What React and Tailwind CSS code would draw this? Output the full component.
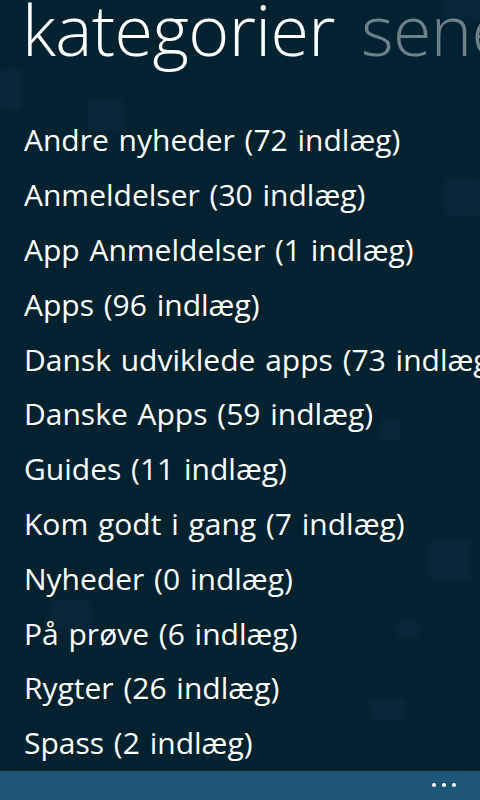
import React from 'react';

const categories = [
  'Andre nyheder (72 indlæg)',
  'Anmeldelser (30 indlæg)',
  'App Anmeldelser (1 indlæg)',
  'Apps (96 indlæg)',
  'Dansk udviklede apps (73 indlæg)',
  'Danske Apps (59 indlæg)',
  'Guides (11 indlæg)',
  'Kom godt i gang (7 indlæg)',
  'Nyheder (0 indlæg)',
  'På prøve (6 indlæg)',
  'Rygter (26 indlæg)',
  'Spass (2 indlæg)',
];

// faint tile shapes in the backdrop
const tiles = [
  { l: 0, t: 70, w: 22, h: 40 },
  { l: 88, t: 100, w: 36, h: 30 },
  { l: 445, t: 0, w: 35, h: 20 },
  { l: 446, t: 178, w: 34, h: 38 },
  { l: 380, t: 420, w: 20, h: 20 },
  { l: 430, t: 540, w: 40, h: 40 },
  { l: 50, t: 600, w: 40, h: 30 },
  { l: 398, t: 620, w: 20, h: 18 },
  { l: 370, t: 700, w: 35, h: 20 },
];

const App = () => {
  return (
    <div
      className="relative w-[480px] h-[800px] overflow-hidden bg-[#03222f] text-white"
      style={{ fontFamily: '"Open Sans", "Noto Sans", sans-serif' }}
    >
      {tiles.map((t, i) => (
        <div
          key={i}
          className="absolute bg-[#0a2a3e] blur-[3px] opacity-70"
          style={{ left: t.l, top: t.t, width: t.w, height: t.h }}
        />
      ))}

      <div className="relative flex flex-col h-full">
        <div className="flex whitespace-nowrap pl-[22px] mt-[-16px] h-[90px] text-[70px] font-light leading-[90px] tracking-[-0.6px]">
          <span>kategorier</span>
          <span className="ml-[26px] text-[#6e808a]">seneste</span>
        </div>

        <ul className="flex flex-col mt-[39px] pl-[24px]">
          {categories.map((c) => (
            <li
              key={c}
              className="h-[54.8px] flex items-center whitespace-nowrap text-[30px] leading-none [word-spacing:2px]"
            >
              {c}
            </li>
          ))}
        </ul>

        <div className="mt-auto h-[30px] bg-[#1d5676] flex justify-end items-center gap-[6px] pr-[24px]">
          <span className="w-[4px] h-[4px] rounded-full bg-white" />
          <span className="w-[4px] h-[4px] rounded-full bg-white" />
          <span className="w-[4px] h-[4px] rounded-full bg-white" />
        </div>
      </div>
    </div>
  );
};

export default App;
